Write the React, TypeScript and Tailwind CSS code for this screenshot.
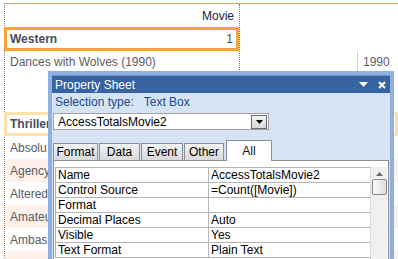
import type { ReactNode } from 'react';

const tabs = ['Format', 'Data', 'Event', 'Other'];
const tabWidths = ['w-[45px]', 'w-[41px]', 'w-[42px]', 'w-[40px]'];

const props: [string, string][] = [
  ['Name', 'AccessTotalsMovie2'],
  ['Control Source', '=Count([Movie])'],
  ['Format', ''],
  ['Decimal Places', 'Auto'],
  ['Visible', 'Yes'],
  ['Text Format', 'Plain Text'],
];

// titles sit under the property sheet, only their first letters show
const movies = ['Absolu', 'Agency', 'Altered', 'Amateu', 'Ambas'];

function Row({ children, shaded }: { children: ReactNode; shaded: boolean }) {
  return (
    <div className={`flex h-[23px] items-center pl-[5px] text-[#5a5a62] ${shaded ? 'bg-[#fdf1ea]' : 'bg-white'}`}>
      <span className="w-[38px] overflow-hidden whitespace-nowrap">{children}</span>
    </div>
  );
}

export default function App() {
  return (
    <div className="relative h-[259px] w-[398px] overflow-hidden bg-white font-['Liberation_Sans',Arial,sans-serif] text-[12px]">
      {/* report canvas */}
      <div className="ml-[4px] h-[259px] border-l border-dotted border-[#8a7c68]">
        <div className="mt-[3px] h-px bg-[#e39a60]" />

        <div className="flex h-[68px]">
          <div className="flex w-[235px] flex-col border-r border-dotted border-[#8a7c68]">
            <div className="flex h-[23px] items-center justify-end pr-[5px] text-[#23233a]">Movie</div>
            <div className="-ml-px flex h-[24px] w-[235px] items-center justify-between border-[3px] border-[#f8a23a] px-[3px] text-[#474c5e]">
              <span className="font-bold">Western</span>
              <span>1</span>
            </div>
            <div className="flex h-[21px] items-center pl-[5px] text-[#5c5c64]">Dances with Wolves (1990)</div>
          </div>
          <div className="flex flex-1 flex-col">
            <div className="h-[47px]" />
            <div className="flex h-[20px]">
              <div className="w-[118px] border-r border-[#d4d4d4]" />
              <div className="flex items-center pl-[5px] pt-[2px] text-[#5c5c70]">1990</div>
            </div>
          </div>
        </div>

        <div className="h-[40px]" />

        <div className="-ml-px flex h-[24px] items-center border-[3px] border-[#fde3ab] px-[3px] font-bold text-[#474c5e]">
          <span className="w-[38px] overflow-hidden whitespace-nowrap">Thriller</span>
        </div>
        {movies.map((m, i) => (
          <Row key={m} shaded={i % 2 === 1}>
            {m}
          </Row>
        ))}
        <div className="h-[8px] bg-[#fdf1ea]" />
      </div>

      {/* property sheet window */}
      <div className="absolute left-[48px] top-[71px] h-[192px] w-[346px] border-[4px] border-b-0 border-[#8eb1e2] bg-[#d5e3f4]">
        <div className="flex h-[18px] items-center justify-between border-t border-[#6f93c8] bg-[#3763a0] pl-[3px] pr-[4px] text-[12px] text-white">
          <span>Property Sheet</span>
          <div className="flex items-center gap-[10px]">
            <svg width="9" height="5" viewBox="0 0 9 5">
              <path d="M0 0h9L4.5 5z" fill="#fff" />
            </svg>
            <svg width="8" height="8" viewBox="0 0 8 8">
              <path d="M1 1l6 6M7 1L1 7" stroke="#fff" strokeWidth="2" />
            </svg>
          </div>
        </div>

        <div className="flex h-[17px] items-center pl-[3px] text-[#21498a]">
          Selection type:&nbsp;&nbsp;&nbsp;Text Box
        </div>

        <div className="ml-[1px] mt-[3px] flex h-[17px] w-[216px] items-center justify-between border border-[#a3a3a3] bg-white pl-[4px] pr-px">
          <span className="text-black">AccessTotalsMovie2</span>
          <div className="flex h-[14px] w-[16px] items-center justify-center border border-[#6b6b6b] bg-gradient-to-b from-[#f4f4f4] to-[#d8d8d8]">
            <svg width="7" height="4" viewBox="0 0 7 4">
              <path d="M0 0h7L3.5 4z" fill="#000" />
            </svg>
          </div>
        </div>

        <div className="ml-[1px] mt-[10px] flex items-end gap-[1px]">
          {tabs.map((t, i) => (
            <div
              key={t}
              className={`flex h-[17px] items-center justify-center border border-b-0 border-[#8c8f97] bg-gradient-to-b from-[#f3f3f3] to-[#d9d9d9] text-black ${tabWidths[i]}`}
            >
              {t}
            </div>
          ))}
          <div className="relative z-10 -mb-px ml-px flex h-[21px] w-[46px] items-center justify-center border border-b-0 border-[#8c8f97] bg-white text-[#111]">
            All
          </div>
        </div>

        <div className="ml-[1px] flex h-[120px] w-[336px] border border-[#8c8f97] bg-white pl-px pt-[6px]">
          <div className="w-[315px] self-start border-l border-t border-[#b5b5b5]">
            {props.map(([k, v]) => (
              <div key={k} className="flex h-[15px] border-b border-[#b5b5b5] leading-[14px] text-black">
                <div className="w-[153px] shrink-0 border-r border-[#b5b5b5] pl-[2px]">{k}</div>
                <div className="flex-1 pl-[2px]">{v}</div>
              </div>
            ))}
          </div>
          <div className="flex w-[17px] flex-col items-center border-l border-dotted border-[#c8c8c8] bg-[#f0f0f0]">
            <svg className="mt-[5px]" width="7" height="4" viewBox="0 0 7 4">
              <path d="M0 4h7L3.5 0z" fill="#6a6a6a" />
            </svg>
            <div className="mt-[3px] h-[16px] w-[15px] rounded-[2px] border border-[#8a8a8a] bg-gradient-to-r from-[#fbfbfb] to-[#dcdcdc]" />
          </div>
        </div>
      </div>
    </div>
  );
}
